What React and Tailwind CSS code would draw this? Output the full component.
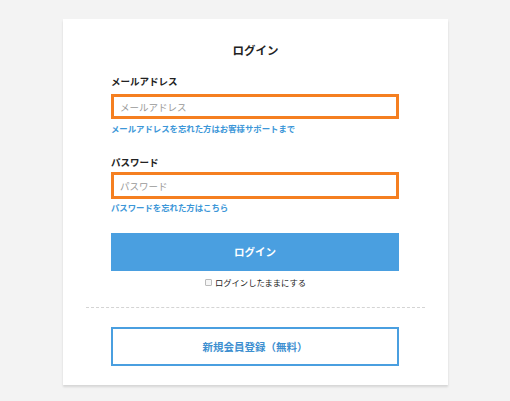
export default function App() {
    return (
        <div className="w-[510px] h-[401px] bg-[#f3f3f3] pt-[19px] pl-[63px] font-['Noto_Sans_CJK_JP','Noto_Sans',sans-serif]">
            <div className="w-[385px] h-[366px] bg-white shadow-[0_2px_2px_rgba(0,0,0,0.12)] flex flex-col">
                <h1 className="mt-[21px] text-center text-[11.5px] leading-[20px] font-bold text-[#222]">ログイン</h1>

                <div className="px-[48px] flex flex-col">
                    <label className="mt-[13px] text-[9.5px] leading-[16px] font-bold text-[#222]">メールアドレス</label>
                    <input
                        placeholder="メールアドレス"
                        className="mt-[5px] h-[25px] w-[288px] border-[3px] border-[#f57f20] px-[6px] text-[9.5px] placeholder:text-[#999] outline-none"
                    />
                    <a className="mt-[2px] text-[8.4px] leading-[14px] font-bold text-[#3d97d8]">メールアドレスを忘れた方はお客様サポートまで</a>

                    <label className="mt-[19px] text-[9.5px] leading-[16px] font-bold text-[#222]">パスワード</label>
                    <input
                        placeholder="パスワード"
                        className="mt-[2px] h-[27px] w-[288px] border-[3px] border-[#f57f20] px-[6px] text-[9.5px] placeholder:text-[#999] outline-none"
                    />
                    <a className="mt-[1px] text-[8.4px] leading-[14px] font-bold text-[#3d97d8]">パスワードを忘れた方はこちら</a>

                    <button className="mt-[19px] h-[38px] w-[288px] bg-[#4a9fe0] text-white text-[10.5px] font-bold">ログイン</button>

                    <div className="mt-[4px] flex items-center justify-center gap-[3px] text-[8.3px] leading-[14px] text-[#222]">
                        <span className="w-[7px] h-[7px] border border-[#bbb] rounded-[1px] bg-[#f6f6f6]"></span>
                        <span>ログインしたままにする</span>
                    </div>
                </div>

                <div className="mt-[18px] mx-[23px] border-t border-dashed border-[#d4d4d4]"></div>

                <div className="px-[48px]">
                    <button className="mt-[19px] h-[39px] w-[288px] border-2 border-[#4a9fe0] text-[#3d8fd0] text-[10.5px] font-bold bg-white">新規会員登録（無料）</button>
                </div>
            </div>
        </div>
    );
}
